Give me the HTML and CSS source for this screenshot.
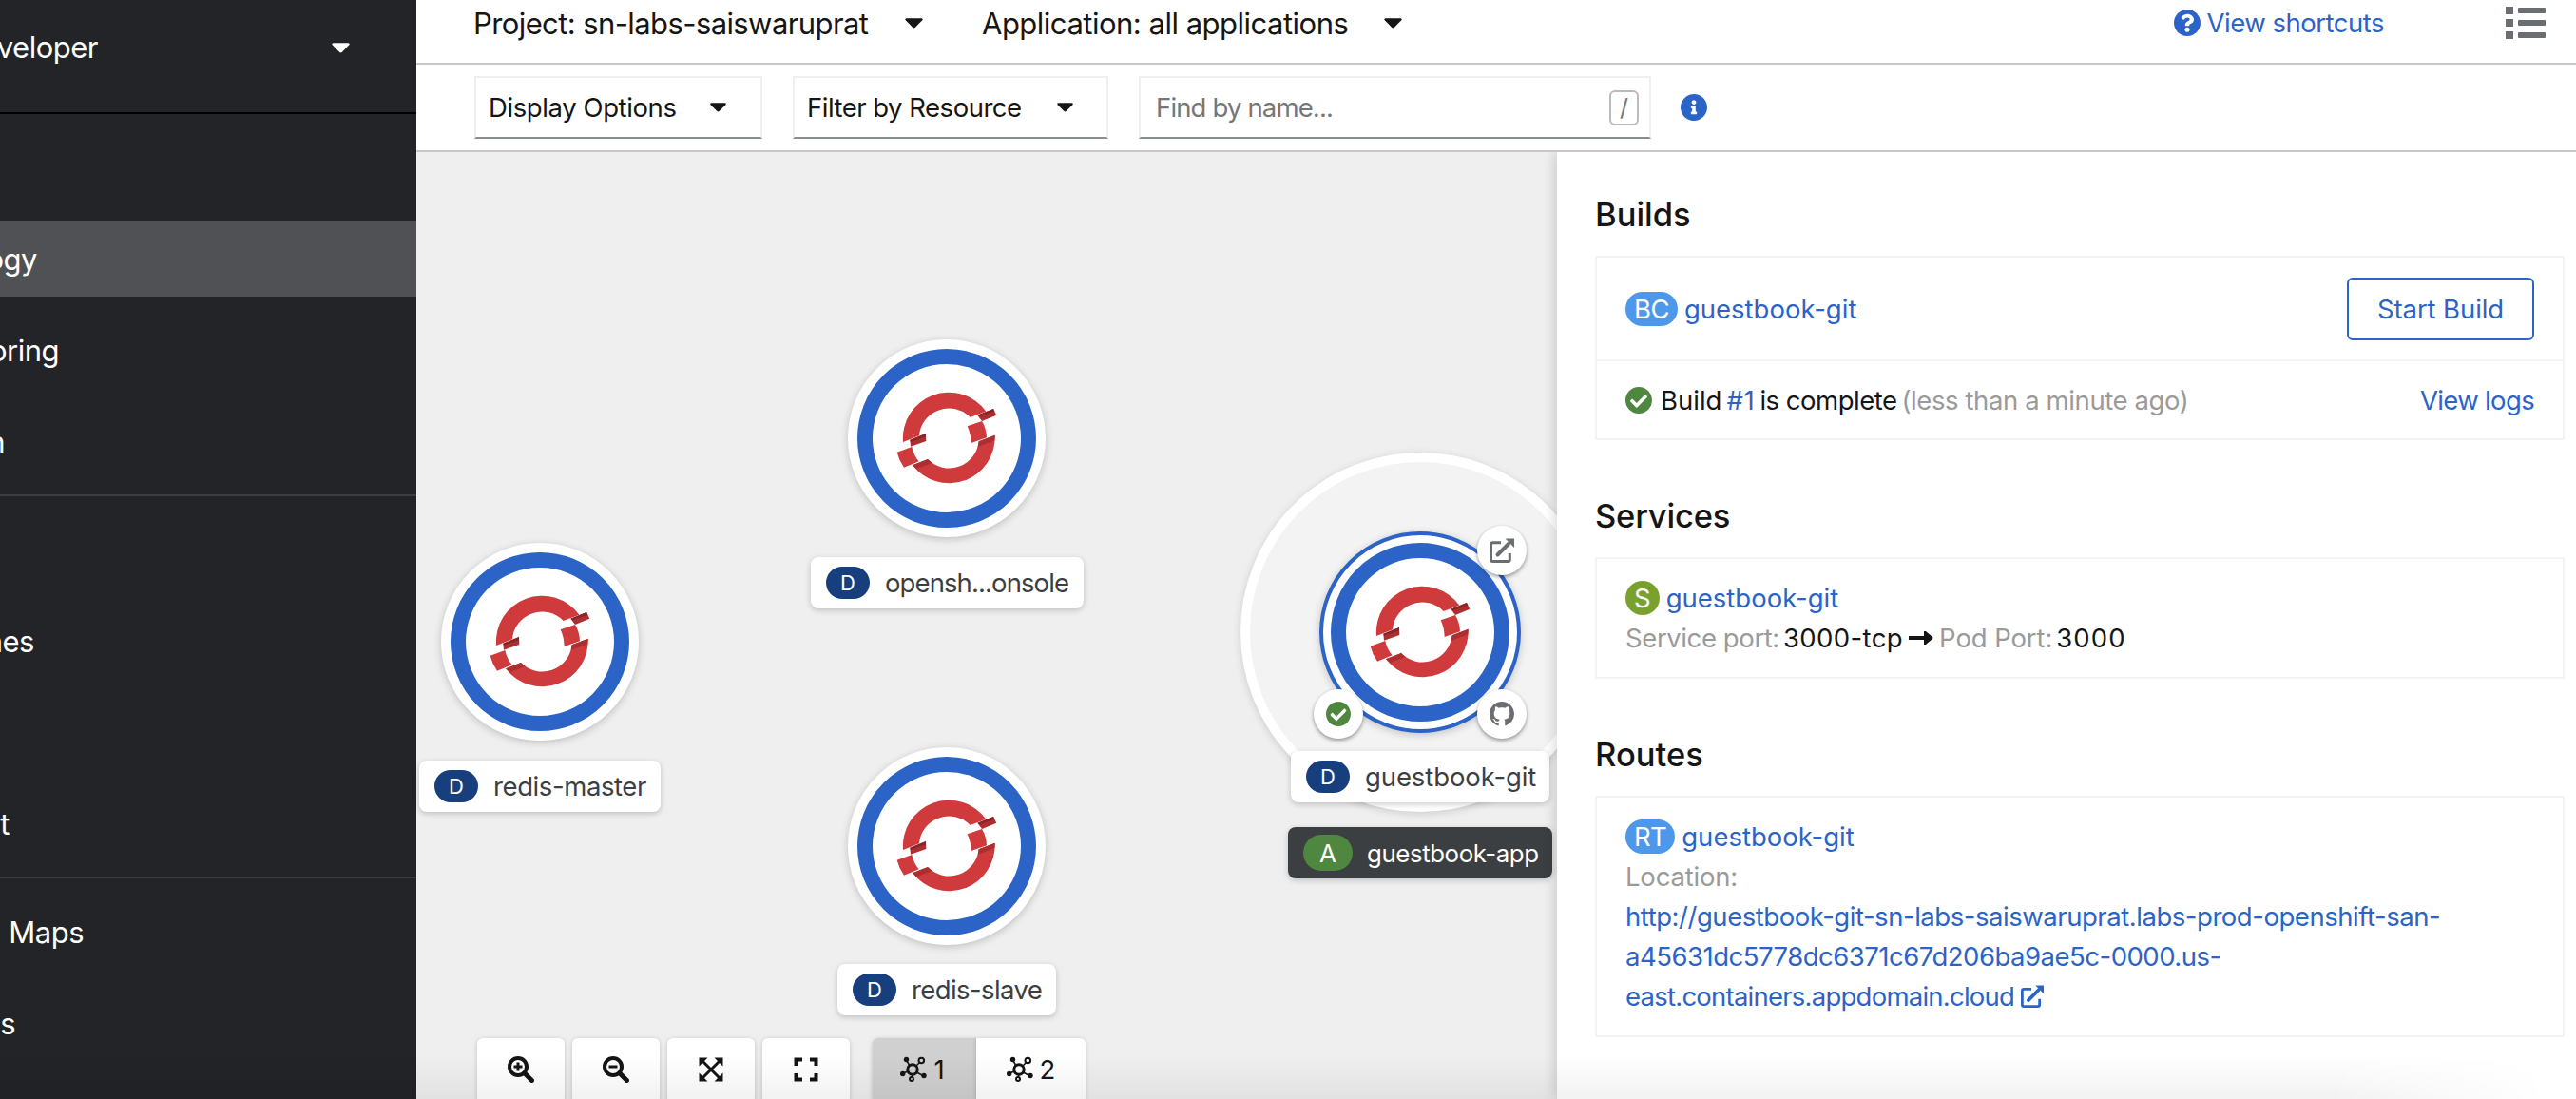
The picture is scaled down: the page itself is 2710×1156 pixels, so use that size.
FILE: index.html
```html
<!DOCTYPE html>
<html lang="en">
<head>
<meta charset="utf-8">
<title>Topology</title>
<link rel="stylesheet" href="styles.css">
</head>
<body>
<svg class="defs" aria-hidden="true">
  <symbol id="caret" viewBox="0 0 20 11"><path d="M1.500 0H18.500Q20.500 .5 19.200 2.200L11.500 10Q10 11.500 8.500 10L.8 2.200Q-.5 .5 1.500 0Z"/></symbol>
  <symbol id="check" viewBox="8 8 496 496"><path d="M504 256c0 136.967-111.033 248-248 248S8 392.967 8 256 119.033 8 256 8s248 111.033 248 248zM227.314 387.314l184-184c6.248-6.248 6.248-16.379 0-22.627l-22.627-22.627c-6.248-6.249-16.379-6.249-22.628 0L216 308.118l-70.059-70.059c-6.248-6.248-16.379-6.248-22.628 0l-22.627 22.627c-6.248 6.248-6.248 16.379 0 22.627l104 104c6.249 6.249 16.379 6.249 22.628.001z"/></symbol>
  <symbol id="question" viewBox="8 8 496 496"><path d="M504 256c0 136.997-111.043 248-248 248S8 392.997 8 256C8 119.083 119.043 8 256 8s248 111.083 248 248zM262.655 90c-54.497 0-89.255 22.957-116.549 63.758-3.536 5.286-2.353 12.415 2.715 16.258l34.699 26.310c5.205 3.947 12.621 3.008 16.665-2.122 17.864-22.658 30.113-35.797 57.303-35.797 20.429 0 45.698 13.148 45.698 32.958 0 14.976-12.363 22.667-32.534 33.976C247.128 238.528 216 254.941 216 296v4c0 6.627 5.373 12 12 12h56c6.627 0 12-5.373 12-12v-1.333c0-28.462 83.186-29.647 83.186-106.667 0-58.002-60.165-102-116.531-102zM256 338c-25.365 0-46 20.635-46 46 0 25.364 20.635 46 46 46s46-20.636 46-46c0-25.365-20.635-46-46-46z"/></symbol>
  <symbol id="info" viewBox="8 8 496 496"><path d="M256 8C119.043 8 8 119.083 8 256c0 136.997 111.043 248 248 248s248-111.003 248-248C504 119.083 392.957 8 256 8zm0 110c23.196 0 42 18.804 42 42s-18.804 42-42 42-42-18.804-42-42 18.804-42 42-42zm56 254c0 6.627-5.373 12-12 12h-88c-6.627 0-12-5.373-12-12v-24c0-6.627 5.373-12 12-12h12v-64h-12c-6.627 0-12-5.373-12-12v-24c0-6.627 5.373-12 12-12h64c6.627 0 12 5.373 12 12v100h12c6.627 0 12 5.373 12 12v24z"/></symbol>
  <symbol id="github" viewBox="0 0 16 16"><path d="M8 0C3.580 0 0 3.580 0 8c0 3.540 2.290 6.530 5.470 7.590.4.070.55-.17.55-.38 0-.19-.01-.82-.01-1.490-2.010.37-2.530-.49-2.690-.94-.09-.23-.48-.94-.82-1.130-.28-.15-.68-.52-.01-.53.63-.01 1.080.58 1.230.82.72 1.210 1.870.87 2.330.66.070-.52.28-.87.51-1.070-1.780-.2-3.640-.89-3.640-3.950 0-.87.31-1.590.82-2.150-.08-.2-.36-1.020.08-2.120 0 0 .67-.21 2.200.82.64-.18 1.320-.27 2-.27s1.360.09 2 .27c1.530-1.040 2.200-.82 2.200-.82.44 1.100.16 1.920.08 2.120.51.56.82 1.270.82 2.150 0 3.070-1.870 3.750-3.650 3.950.29.25.54.73.54 1.480 0 1.070-.01 1.930-.01 2.200 0 .21.15.46.55.38A8.010 8.010 0 0 0 16 8c0-4.420-3.580-8-8-8z"/></symbol>
  <symbol id="external" viewBox="0 0 26 26"><path d="M12 4.700H3.500Q1.500 4.700 1.500 6.700V22.500Q1.500 24.500 3.500 24.500H19.300Q21.300 24.500 21.300 22.500V16" fill="none" stroke="currentColor" stroke-width="3"/><path d="M8.500 17.500L20 6" fill="none" stroke="currentColor" stroke-width="4" stroke-linecap="round"/><path d="M16.500 .5H26V10Z"/></symbol>
  <symbol id="openshift" viewBox="126 81 624 624">
    <g fill="#cf3a3c">
      <path d="M300 405A145 145 0 0 1 562 308L512 327A94 94 0 0 0 351 385Z"/>
      <path d="M503 355L549 339Q563 362 564 391L515 408Q514 378 503 355Z"/>
      <path d="M590 383A145 145 0 0 1 330 478L378 459A94 94 0 0 0 539 403Z"/>
      <path d="M281 437L328 420Q333 446 350 466L303 485Q287 462 281 437Z"/>
    </g>
    <g fill="#ab2f31">
      <path d="M535 320L585 300L595 320L549 339Z"/>
      <path d="M539 403L590 383L589 400L536 420Z"/>
      <path d="M322 398L372 378L373 402L324 419Z"/>
      <path d="M330 478L378 459L392 471L343 490Z"/>
    </g>
    <g fill="#8a2427">
      <path d="M535 320L585 300L589 308L541 325Z"/>
      <path d="M322 398L372 378L372 388L324 405Z"/>
    </g>
  </symbol>
  <symbol id="topo" viewBox="0 0 28 28">
    <g fill="none" stroke="currentColor" stroke-width="2">
      <circle cx="13" cy="14" r="5.200" stroke-width="3"/><circle cx="22.300" cy="4.500" r="2.800"/><circle cx="12" cy="24" r="2"/>
      <path d="M7 5L10 10M17 10L20 7M3 18L8 16M17.500 17L23 20M12.500 19V22" stroke-width="1.500"/>
    </g>
    <circle cx="6.500" cy="3.500" r="2.700"/><circle cx="2.700" cy="18.500" r="2.700"/><circle cx="25" cy="20.500" r="2.700"/>
  </symbol>
</svg>
<div class="app">
  <nav class="sidebar">
    <div class="perspective"><span class="label end-developer">veloper</span><svg class="caret"><use href="#caret"/></svg></div>
    <ul class="nav-group">
      <li></li>
      <li class="active"><span class="label end-topology">ogy</span></li>
      <li><span class="label end-monitoring">oring</span></li>
      <li><span class="label end-search">n</span></li>
    </ul>
    <ul class="nav-group">
      <li></li>
      <li><span class="label end-pipelines">nes</span></li>
      <li></li>
      <li><span class="label end-project">t</span></li>
    </ul>
    <ul class="nav-group">
      <li><span class="label end-maps">Maps</span></li>
      <li><span class="label end-secrets">s</span></li>
    </ul>
  </nav>
  <main class="main">
    <header class="context-bar">
      <button class="context project"><span class="t ls-60">Project: sn-labs-saiswaruprat</span><svg class="caret"><use href="#caret"/></svg></button>
      <button class="context application"><span class="t ls-50">Application: all applications</span><svg class="caret"><use href="#caret"/></svg></button>
      <a class="shortcuts"><svg><use href="#question"/></svg><span class="t ls-50">View shortcuts</span></a>
      <svg class="list-icon" viewBox="0 0 42 34"><path d="M0 0h8v8H0zM0 13h8v8H0zM0 26h8v8H0z"/><rect x="13" y="1" width="29" height="6" rx="1"/><rect x="13" y="14" width="29" height="6" rx="1"/><rect x="13" y="27" width="29" height="6" rx="1"/></svg>
    </header>
    <div class="toolbar">
      <button class="select display"><span class="t ls-40">Display Options</span><svg class="caret"><use href="#caret"/></svg></button>
      <button class="select filter"><span class="t ls-50">Filter by Resource</span><svg class="caret"><use href="#caret"/></svg></button>
      <div class="search"><span class="t ls-85">Find by name...</span><kbd>/</kbd></div>
      <svg class="info-icon"><use href="#info"/></svg>
    </div>
    <div class="content">
      <section class="canvas">
        <div class="node console"><svg class="logo"><use href="#openshift"/></svg></div>
        <div class="tag tag-console"><b>D</b><span class="t ls-90">opensh...onsole</span></div>
        <div class="node master"><svg class="logo"><use href="#openshift"/></svg></div>
        <div class="tag tag-master"><b>D</b><span class="t ls-40">redis-master</span></div>
        <div class="node slave"><svg class="logo"><use href="#openshift"/></svg></div>
        <div class="tag tag-slave"><b>D</b><span class="t ls-60">redis-slave</span></div>
        <div class="group"></div>
        <div class="node guestbook"><svg class="logo"><use href="#openshift"/></svg></div>
        <div class="decorator open"><svg><use href="#external"/></svg></div>
        <div class="decorator built"><svg><use href="#check"/></svg></div>
        <div class="decorator repo"><svg><use href="#github"/></svg></div>
        <div class="tag tag-guestbook"><b>D</b><span class="t ls-10">guestbook-git</span></div>
        <div class="tag tag-app"><b>A</b><span class="t ls-40">guestbook-app</span></div>
        <div class="controls">
          <button><svg viewBox="0 0 28 28"><circle cx="11" cy="11" r="9" class="ln4"/><path d="M18 18L25.500 25.500" class="ln5"/><path d="M11 6.500V15.500M6.500 11H15.500" class="ln3"/></svg></button>
          <button><svg viewBox="0 0 28 28"><circle cx="11" cy="11" r="9" class="ln4"/><path d="M18 18L25.500 25.500" class="ln5"/><path d="M6.500 11H15.500" class="ln3"/></svg></button>
          <button><svg viewBox="0 0 28 28"><path d="M5 5L23 23M23 5L5 23" class="ln3"/><path d="M1.500 1.500H10.500L1.500 10.500ZM26.500 1.500V10.500L17.500 1.500ZM1.500 26.500V17.500L10.500 26.500ZM26.500 26.500H17.500L26.500 17.500Z"/></svg></button>
          <button><svg viewBox="0 0 28 28"><path d="M3.500 10V3.500H10M18 3.500H24.500V10M24.500 18V24.500H18M10 24.500H3.500V18" class="ln4"/></svg></button>
          <div class="layouts">
            <button class="selected"><svg><use href="#topo"/></svg>1</button>
            <button><svg><use href="#topo"/></svg>2</button>
          </div>
        </div>
      </section>
      <aside class="panel">
        <h2>Builds</h2>
        <div class="card">
          <div class="row build-config"><span class="pill ls-60">BC</span><a class="t">guestbook-git</a><button class="start"><span class="t ls-10">Start Build</span></button></div>
          <div class="row build"><svg class="ok"><use href="#check"/></svg><span class="t">Build</span><a class="t number">#1</a><span class="t ls-50">is complete</span><span class="t muted ls-40">(less than a minute ago)</span><a class="logs t ls-66">View logs</a></div>
        </div>
        <h2 class="ls-20">Services</h2>
        <div class="card padded">
          <div class="line"><span class="pill green">S</span><a class="t">guestbook-git</a></div>
          <div class="line ports"><span class="t muted ls-40">Service port:</span><span class="t wide port">3000-tcp</span><svg class="arrow" viewBox="0 0 26 14"><path d="M0 5H16V0Q17 -1 18.500 .5L25 6Q26 7 25 8L18.500 13.500Q17 15 16 14V9H0Z"/></svg><span class="t muted ls-10">Pod Port:</span><span class="t wider port">3000</span></div>
        </div>
        <h2>Routes</h2>
        <div class="card padded">
          <div class="line"><span class="pill ls-60">RT</span><a class="t">guestbook-git</a></div>
          <div class="line"><span class="t muted ls-20">Location:</span></div>
          <div class="line"><a class="t ls-46">http://guestbook-git-sn-labs-saiswaruprat.labs-prod-openshift-san-</a></div>
          <div class="line"><a class="t ls-50">a45631dc5778dc6371c67d206ba9ae5c-0000.us-</a></div>
          <div class="line"><a class="t ls-76">east.containers.appdomain.cloud</a><svg class="ext"><use href="#external"/></svg></div>
        </div>
      </aside>
    </div>
  </main>
</div>
<div class="edge-shade"></div>
</body>
</html>
```
FILE: styles.css
```css
*, *::before, *::after { box-sizing: border-box; }
body { margin: 0; width: 2710px; height: 1156px; overflow: hidden; background: #fff; color: #151515; font-family: Inter, "Liberation Sans", sans-serif; font-size: 27.5px; position: relative; }
button { font: inherit; color: inherit; background: none; border: 0; padding: 0; margin: 0; }
svg { display: block; flex: none; fill: currentColor; }
a { color: #2b64c6; }
.defs { position: absolute; width: 0; height: 0; }
.app { display: flex; height: 1156px; }
.t { white-space: nowrap; flex: none; }
.ls-10 { letter-spacing: -.1px; }
.ls-20 { letter-spacing: -.2px; }
.ls-40 { letter-spacing: -.4px; }
.ls-46 { letter-spacing: -.46px; }
.ls-50 { letter-spacing: -.5px; }
.ls-60 { letter-spacing: -.6px; }
.ls-66 { letter-spacing: -.66px; }
.ls-76 { letter-spacing: -.76px; }
.ls-85 { letter-spacing: -.85px; }
.ls-90 { letter-spacing: -.9px; }
.wide { letter-spacing: .4px; }
.wider { letter-spacing: 1.1px; }

.sidebar { width: 438px; flex: none; background: #222428; color: #fff; font-size: 31px; overflow: hidden; }
.perspective { height: 120px; padding-right: 70px; padding-bottom: 20px; border-bottom: 2px solid #000; display: flex; align-items: center; justify-content: space-between; }
.perspective .caret { margin-top: 2px; }
.label { display: flex; justify-content: flex-end; white-space: nowrap; letter-spacing: -.5px; }
.caret { width: 19px; height: 11px; }
.nav-group { list-style: none; margin: 0; padding: 16px 0; border-bottom: 2px solid #3c3f42; display: flex; flex-direction: column; gap: 16px; }
.nav-group:last-child { border-bottom: 0; }
.nav-group li { height: 80px; display: flex; align-items: center; }
.nav-group li.active { background: #4f5154; }
.end-developer { width: 103px; }
.end-topology { width: 39px; }
.end-monitoring { width: 62px; }
.end-search { width: 5px; }
.end-pipelines { width: 36px; }
.end-project { width: 10px; }
.end-maps { width: 88px; }
.end-secrets { width: 16px; }

.main { width: 2272px; display: flex; flex-direction: column; }
.context-bar { height: 68px; flex: none; border-bottom: 2px solid #c8c8c8; padding: 0 32px 18px 60px; display: flex; align-items: center; font-size: 31px; }
.context { display: flex; align-items: center; justify-content: space-between; }
.project { width: 473px; margin-right: 62px; }
.application { width: 442px; }
.shortcuts { display: flex; align-items: center; gap: 7px; margin-left: auto; font-size: 27.5px; }
.shortcuts svg { width: 28px; height: 28px; }
.list-icon { width: 42px; height: 34px; margin-left: 128px; color: #6a6e73; }
.toolbar { height: 92px; flex: none; border-bottom: 2px solid #c8c8c8; padding: 12px 0 12px 61px; display: flex; align-items: center; }
.select, .search { height: 66px; border: 2px solid #efefef; border-bottom-color: #8a8d90; display: flex; align-items: center; justify-content: space-between; padding-left: 13px; }
.select .caret { width: 17px; height: 10px; }
.display { width: 303px; padding-right: 36px; margin-right: 32px; }
.filter { width: 332px; padding-right: 35px; margin-right: 32px; }
.search { width: 539px; padding: 0 11px 0 16px; color: #767676; }
kbd { font: inherit; font-size: 25px; width: 31px; height: 37px; border: 2px solid #bbb; border-radius: 6px; display: flex; align-items: center; justify-content: center; }
.info-icon { width: 28px; height: 28px; margin-left: 31px; color: #2b64c6; }
.content { flex: 1; display: flex; min-height: 0; }

.canvas { position: relative; width: 1200px; flex: none; background: #efefef; overflow: hidden; }
.node { position: absolute; width: 208px; height: 208px; border-radius: 50%; border: 10px solid #fff; background: #fff; box-shadow: 0 2px 8px rgba(0,0,0,.2); }
.node::before { content: ""; display: block; width: 188px; height: 188px; border-radius: 50%; border: 16px solid #2b64c6; }
.logo { position: absolute; left: -10px; top: -10px; width: 208px; height: 208px; }
.console { left: 454px; top: 197px; }
.master { left: 26px; top: 411px; }
.slave { left: 454px; top: 626px; }
.guestbook { left: 952px; top: 401px; box-shadow: 0 2px 8px 2px rgba(0,0,0,.2); }
.guestbook::after { content: ""; position: absolute; left: -12px; top: -12px; width: 212px; height: 212px; border: 4px solid #2b64c6; border-radius: 50%; }
.group { position: absolute; left: 867px; top: 316px; width: 378px; height: 378px; border: 10px solid #fff; border-radius: 50%; background: #f3f3f3; box-shadow: 0 2px 8px rgba(0,0,0,.15); }
.decorator { position: absolute; width: 52px; height: 52px; border-radius: 50%; background: #fff; box-shadow: 0 2px 4px rgba(0,0,0,.4); display: flex; align-items: center; justify-content: center; color: #6a6e73; }
.decorator svg { width: 26px; height: 26px; }
.open { left: 1116px; top: 393px; }
.built { left: 944px; top: 565px; color: #4f8640; }
.repo { left: 1116px; top: 565px; }
.tag { position: absolute; height: 54px; border-radius: 8px; background: #fff; color: #3c3f42; box-shadow: 0 2px 6px rgba(0,0,0,.2); display: flex; align-items: center; padding-left: 16px; gap: 16px; }
.tag b { flex: none; font-weight: 400; font-size: 22px; width: 46px; height: 34px; border-radius: 17px; background: #183f7d; color: #fff; display: flex; align-items: center; justify-content: center; }
.tag-console { left: 415px; top: 426px; width: 287px; }
.tag-master { left: 3px; top: 640px; width: 254px; }
.tag-slave { left: 443px; top: 854px; width: 230px; }
.tag-guestbook { left: 920px; top: 630px; width: 272px; }
.tag-app { left: 917px; top: 710px; width: 278px; background: #3c3f42; color: #fff; gap: 15px; font-size: 25.8px; }
.tag-app b { width: 52px; height: 38px; border-radius: 19px; background: #4f8640; font-size: 26px; }

.controls { position: absolute; left: 64px; top: 932px; display: flex; gap: 8px; }
.controls button { width: 92px; height: 72px; border-radius: 6px; background: #fff; box-shadow: 0 1px 5px rgba(0,0,0,.2); display: flex; align-items: center; justify-content: center; gap: 7px; padding-bottom: 6px; }
.controls svg { width: 28px; height: 28px; }
.ln3, .ln4, .ln5 { fill: none; stroke: currentColor; stroke-width: 3; }
.ln4 { stroke-width: 4; }
.ln5 { stroke-width: 5; stroke-linecap: round; }
.layouts { display: flex; margin-left: 16px; }
.controls .layouts button { width: 115px; border-radius: 0 6px 6px 0; }
.controls .layouts .selected { width: 109px; border-radius: 6px 0 0 6px; background: #d0d0d0; padding-right: 4px; }

.panel { width: 1072px; padding: 44px 12px 0 40px; background: #fff; box-shadow: -3px 0 12px rgba(0,0,0,.15); position: relative; clip-path: inset(0 0 0 -20px); }
h2 { margin: 0; font-size: 34.5px; font-weight: 500; line-height: 44px; }
.card { border: 2px solid #f3f3f3; margin: 21px 0 58px; height: 194px; }
.row { display: flex; align-items: center; padding: 0 30px; }
.build-config { height: 109px; border-bottom: 2px solid #f3f3f3; }
.pill { height: 36px; border-radius: 18px; padding: 0 9px; margin-right: 7px; background: #4e98ec; color: #fff; display: flex; align-items: center; }
.green { background: #7aa12e; }
.start { margin-left: auto; width: 197px; height: 66px; border: 2px solid #2b64c6; border-radius: 6px; color: #2b64c6; }
.build { height: 82px; }
.build .t + .t { margin-left: 5px; }
.build .logs.t { margin-left: auto; }
.number { letter-spacing: .7px; }
.ok { width: 28px; height: 28px; color: #4f8640; margin-right: 9px; }
.muted { color: #9a9a9a; }
.padded { padding: 20px 30px; height: auto; }
.line { display: flex; align-items: center; height: 42px; }
.port { margin-left: 4px; }
.arrow { width: 26px; height: 14px; margin: 0 6px; }
.ext { width: 24px; height: 24px; color: #2b64c6; margin-left: 7px; }

.edge-shade { position: absolute; left: 0; bottom: 0; width: 2710px; height: 46px; background: linear-gradient(rgba(0,0,0,0), rgba(0,0,0,.05)); mask-image: linear-gradient(90deg, #000 2450px, transparent 2680px); }
```
